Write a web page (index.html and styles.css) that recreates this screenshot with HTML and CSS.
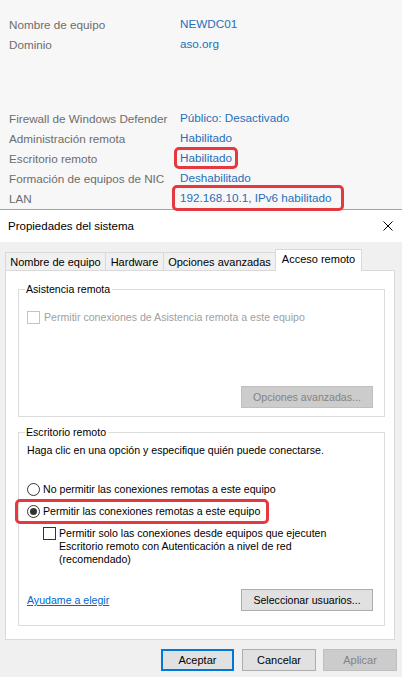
FILE: index.html
```html
<!DOCTYPE html>
<html lang="es">
<head>
<meta charset="utf-8">
<title>Propiedades del sistema</title>
<link rel="stylesheet" href="styles.css">
</head>
<body>
<div class="sysinfo">
  <div class="info-group">
    <div class="row"><span class="label">Nombre de equipo</span><span class="value">NEWDC01</span></div>
    <div class="row"><span class="label">Dominio</span><span class="value">aso.org</span></div>
  </div>
  <div class="info-group second">
    <div class="row"><span class="label">Firewall de Windows Defender</span><span class="value">Público: Desactivado</span></div>
    <div class="row"><span class="label">Administración remota</span><span class="value">Habilitado</span></div>
    <div class="row"><span class="label">Escritorio remoto</span><span class="value mark mark-rdp">Habilitado</span></div>
    <div class="row"><span class="label">Formación de equipos de NIC</span><span class="value">Deshabilitado</span></div>
    <div class="row"><span class="label">LAN</span><span class="value mark mark-lan">192.168.10.1, IPv6 habilitado</span></div>
  </div>
</div>

<div class="dialog">
  <div class="titlebar">
    <span class="title">Propiedades del sistema</span>
    <svg class="close" width="10" height="10" viewBox="0 0 10 10"><path d="M0.5 0.5 L9.5 9.5 M9.5 0.5 L0.5 9.5" stroke="#000" stroke-width="1" fill="none"/></svg>
  </div>
  <div class="body">
    <div class="tabs">
      <div class="tab t1">Nombre de equipo</div>
      <div class="tab t2">Hardware</div>
      <div class="tab t3">Opciones avanzadas</div>
      <div class="tab t4 active">Acceso remoto</div>
    </div>
    <div class="panel">
      <fieldset class="group g-asist">
        <legend>Asistencia remota</legend>
        <div class="check-row disabled">
          <span class="checkbox disabled-box"></span>
          <span>Permitir conexiones de Asistencia remota a este equipo</span>
        </div>
        <div class="btn-row">
          <span class="btn btn-disabled">Opciones avanzadas...</span>
        </div>
      </fieldset>
      <fieldset class="group g-rdp">
        <legend>Escritorio remoto</legend>
        <div class="desc">Haga clic en una opción y especifique quién puede conectarse.</div>
        <div class="radio-row r1"><span class="radio"></span><span>No permitir las conexiones remotas a este equipo</span></div>
        <div class="radio-row r2 mark-radio"><span class="radio checked"></span><span>Permitir las conexiones remotas a este equipo</span></div>
        <div class="nla-row">
          <span class="checkbox"></span>
          <span class="nla-text">Permitir solo las conexiones desde equipos que ejecuten<br>Escritorio remoto con Autenticación a nivel de red<br>(recomendado)</span>
        </div>
        <div class="help-row">
          <a class="link" href="#">Ayudame a elegir</a>
          <span class="btn">Seleccionar usuarios...</span>
        </div>
      </fieldset>
    </div>
    <div class="footer">
      <span class="btn fbtn default">Aceptar</span>
      <span class="btn fbtn">Cancelar</span>
      <span class="btn fbtn btn-disabled">Aplicar</span>
    </div>
  </div>
</div>
</body>
</html>
```

FILE: styles.css
```css
html, body {
  margin: 0;
  padding: 0;
}
body {
  width: 402px;
  height: 677px;
  overflow: hidden;
  background: #f0f0f0;
  font-family: "Liberation Sans", Arial, sans-serif;
}

/* ---------- top system info panel ---------- */
.sysinfo {
  box-sizing: border-box;
  height: 210px;
  padding: 14px 0 0 9px;
  background: #f7f7f7;
  border-bottom: 1px solid #a3a3a3;
  font-size: 11.7px;
}
.info-group.second {
  margin-top: 54px;
}
.row {
  display: flex;
  align-items: center;
  height: 20px;
}
.label {
  width: 171px;
  color: #6d6d6d;
}
.value {
  color: #1f6fba;
  line-height: 14px;
}
.mark {
  display: inline-block;
  border: 3px solid #e5383f;
  border-radius: 5px;
}
.mark-rdp {
  padding: 1px 3px;
  margin: -4px -6px;
}
.mark-lan {
  padding: 3px 10px 3px 5px;
  margin: -6px -13px -6px -8px;
}

/* ---------- dialog ---------- */
.dialog {
  font-size: 10.6px;
  color: #000;
}
.titlebar {
  height: 32px;
  background: #fff;
  display: flex;
  align-items: center;
  justify-content: space-between;
  padding: 0 9px 0 8px;
}
.title {
  font-size: 11.5px;
}
.close {
  display: block;
}
.body {
  background: #f0f0f0;
  height: 435px;
}
.tabs {
  display: flex;
  align-items: flex-end;
  padding: 7px 0 0 5px;
  height: 21px;
}
.tab {
  box-sizing: border-box;
  height: 18px;
  border: 1px solid #d9d9d9;
  border-bottom: none;
  margin-right: -1px;
  background: #f0f0f0;
  text-align: center;
  line-height: 18px;
  font-size: 11px;
}
.t1 { width: 101px; }
.t2 { width: 59px; }
.t3 { width: 113px; }
.t4 { width: 87px; }
.tab.active {
  height: 22px;
  margin-bottom: -1px;
  background: #fff;
  line-height: 18px;
  position: relative;
  z-index: 1;
}
.panel {
  box-sizing: border-box;
  position: relative;
  width: 390px;
  height: 370px;
  margin-left: 5px;
  padding: 11px 0 0 12px;
  background: #fff;
  border: 1px solid #d9d9d9;
}
.group {
  box-sizing: border-box;
  width: 367px;
  margin: 0;
  padding: 0 11px 0 8px;
  border: 1px solid #dcdcdc;
  min-inline-size: 0;
}
.group legend {
  margin-left: -2px;
  padding: 0 2px 0 1px;
  line-height: 14px;
  height: 14px;
}
.g-asist {
  padding-bottom: 8px;
}
.g-rdp {
  margin-top: 8px;
  padding-bottom: 14px;
}

.check-row {
  display: flex;
  align-items: center;
  height: 14px;
  margin-top: 14px;
  gap: 4px;
}
.check-row.disabled {
  color: #a0a0a0;
}
.checkbox {
  box-sizing: border-box;
  width: 13px;
  height: 13px;
  border: 1px solid #333;
  background: #fff;
  flex: none;
}
.checkbox.disabled-box {
  border-color: #c4c4c4;
}
.btn-row {
  display: flex;
  justify-content: flex-end;
  margin-top: 62px;
}
.btn {
  box-sizing: border-box;
  display: flex;
  align-items: center;
  justify-content: center;
  width: 132px;
  height: 22px;
  background: #e1e1e1;
  border: 1px solid #adadad;
  color: #000;
}
.btn.btn-disabled {
  background: #cccccc;
  border-color: #bfbfbf;
  color: #838383;
}

.desc {
  margin-top: 4px;
  line-height: 14px;
}
.radio-row {
  display: flex;
  align-items: center;
  height: 14px;
  gap: 3px;
}
.r1 { margin-top: 25px; }
.r2 { margin-top: 8px; }
.mark-radio {
  width: fit-content;
  border: 3px solid #e5383f;
  border-radius: 5px;
  padding: 2px 6px 3px 9px;
  margin-bottom: -6px;
  margin-left: -12px;
  margin-top: 3px;
}
.radio {
  box-sizing: border-box;
  width: 13px;
  height: 13px;
  border: 1px solid #333;
  border-radius: 50%;
  background: #fff;
  display: flex;
  align-items: center;
  justify-content: center;
  flex: none;
}
.radio.checked::before {
  content: "";
  width: 7px;
  height: 7px;
  border-radius: 50%;
  background: #333;
}
.nla-row {
  display: flex;
  align-items: flex-start;
  gap: 3px;
  margin-top: 9px;
  padding-left: 16px;
}
.nla-text {
  line-height: 13px;
}
.help-row {
  display: flex;
  align-items: center;
  justify-content: space-between;
  margin-top: 23px;
}
.link {
  color: #0066cc;
  text-decoration: underline;
}

.footer {
  display: flex;
  justify-content: flex-end;
  gap: 7px;
  padding: 9px 5px 0 0;
}
.fbtn {
  width: 74px;
  font-size: 11px;
}
.fbtn.default {
  width: 73px;
  margin-right: 1px;
  border: 2px solid #0078d7;
}
```
